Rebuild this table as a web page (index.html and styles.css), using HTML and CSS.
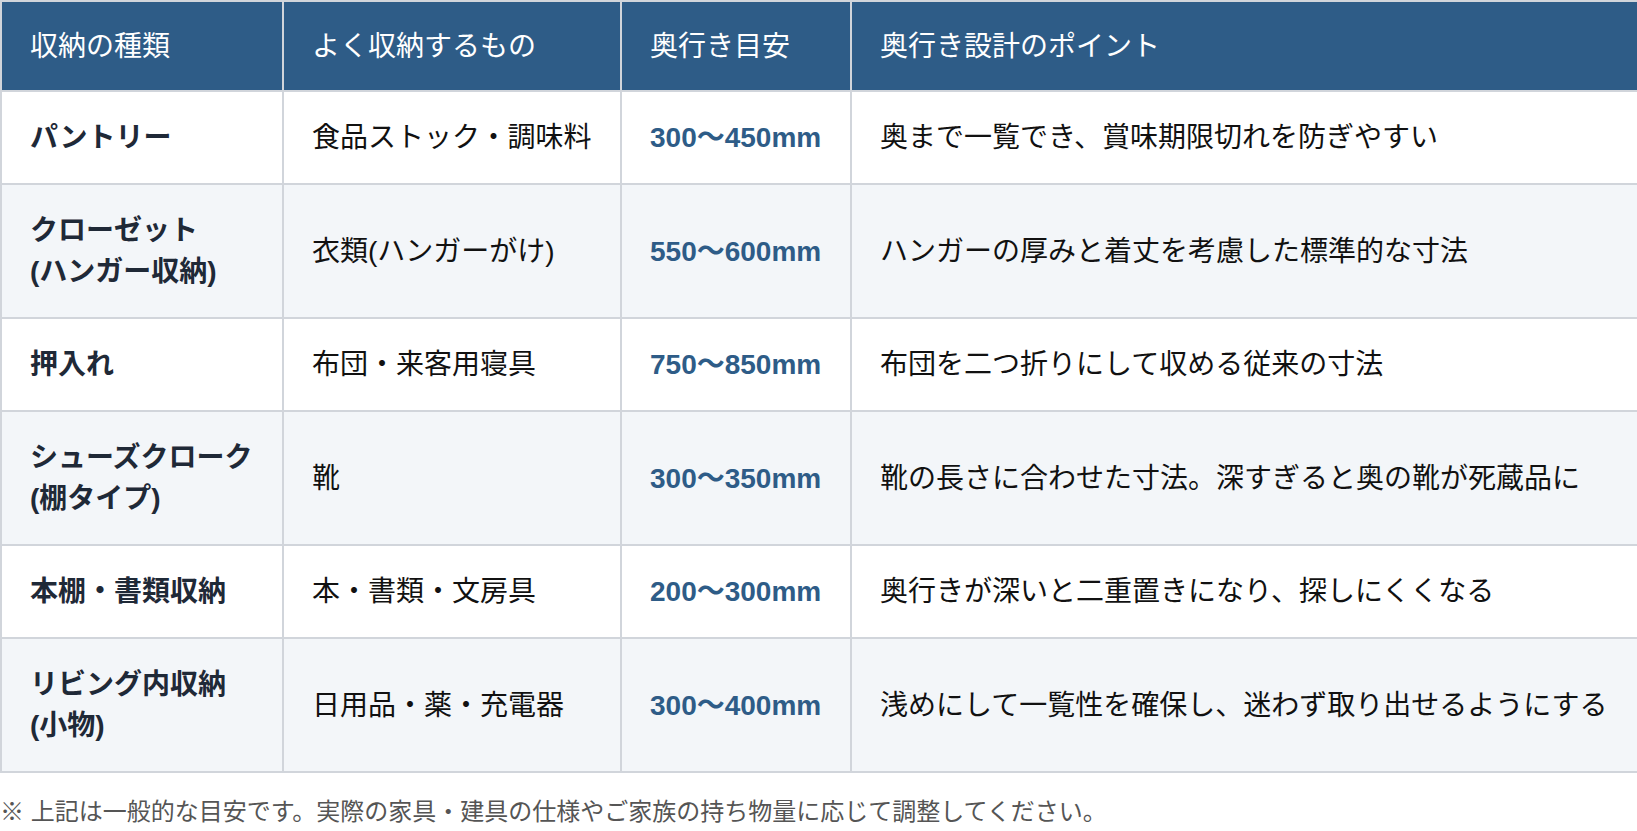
FILE: index.html
```html
<!DOCTYPE html>
<html lang="ja">
<head>
<meta charset="utf-8">
<title>収納の奥行き目安</title>
<link rel="stylesheet" href="styles.css">
</head>
<body>
<table class="depth-table">
  <colgroup>
    <col class="c1"><col class="c2"><col class="c3"><col class="c4">
  </colgroup>
  <thead>
    <tr>
      <th>収納の種類</th>
      <th>よく収納するもの</th>
      <th>奥行き目安</th>
      <th>奥行き設計のポイント</th>
    </tr>
  </thead>
  <tbody>
    <tr>
      <td class="type">パントリー</td>
      <td>食品ストック・調味料</td>
      <td class="val">300〜450mm</td>
      <td>奥まで一覧でき、賞味期限切れを防ぎやすい</td>
    </tr>
    <tr>
      <td class="type">クローゼット<br>(ハンガー収納)</td>
      <td>衣類(ハンガーがけ)</td>
      <td class="val">550〜600mm</td>
      <td>ハンガーの厚みと着丈を考慮した標準的な寸法</td>
    </tr>
    <tr>
      <td class="type">押入れ</td>
      <td>布団・来客用寝具</td>
      <td class="val">750〜850mm</td>
      <td>布団を二つ折りにして収める従来の寸法</td>
    </tr>
    <tr>
      <td class="type">シューズクローク<br>(棚タイプ)</td>
      <td>靴</td>
      <td class="val">300〜350mm</td>
      <td>靴の長さに合わせた寸法。深すぎると奥の靴が死蔵品に</td>
    </tr>
    <tr>
      <td class="type">本棚・書類収納</td>
      <td>本・書類・文房具</td>
      <td class="val">200〜300mm</td>
      <td>奥行きが深いと二重置きになり、探しにくくなる</td>
    </tr>
    <tr>
      <td class="type">リビング内収納<br>(小物)</td>
      <td>日用品・薬・充電器</td>
      <td class="val">300〜400mm</td>
      <td>浅めにして一覧性を確保し、迷わず取り出せるようにする</td>
    </tr>
  </tbody>
</table>
<p class="note">※ 上記は一般的な目安です。実際の家具・建具の仕様やご家族の持ち物量に応じて調整してください。</p>
</body>
</html>
```

FILE: styles.css
```css
html, body {
  margin: 0;
  padding: 0;
  background: #ffffff;
}
body {
  font-family: "Liberation Sans", Arial, "Noto Sans CJK JP", sans-serif;
  color: #1a1a1a;
}
.depth-table {
  width: 1637px;
  border-collapse: collapse;
  table-layout: fixed;
  font-size: 28px;
  line-height: 41px;
}
.c1 { width: 282px; }
.c2 { width: 338px; }
.c3 { width: 230px; }
.c4 { width: 787px; }
.depth-table th,
.depth-table td {
  border: 2px solid #d1d5db;
  text-align: left;
  vertical-align: middle;
}
.depth-table th {
  background: #2e5c87;
  color: #ffffff;
  font-weight: normal;
  padding: 24px 28px 23px;
}
.depth-table td {
  padding: 25px 28px;
  color: #111111;
}
.depth-table tbody tr:nth-child(even) td {
  background: #f3f6f9;
}
.depth-table td.type {
  font-weight: bold;
  color: #1f2937;
}
.depth-table td.val {
  font-weight: bold;
  color: #2e5c87;
}
.note {
  margin: 21px 0 0;
  font-size: 24px;
  line-height: 36px;
  color: #555555;
}
```
